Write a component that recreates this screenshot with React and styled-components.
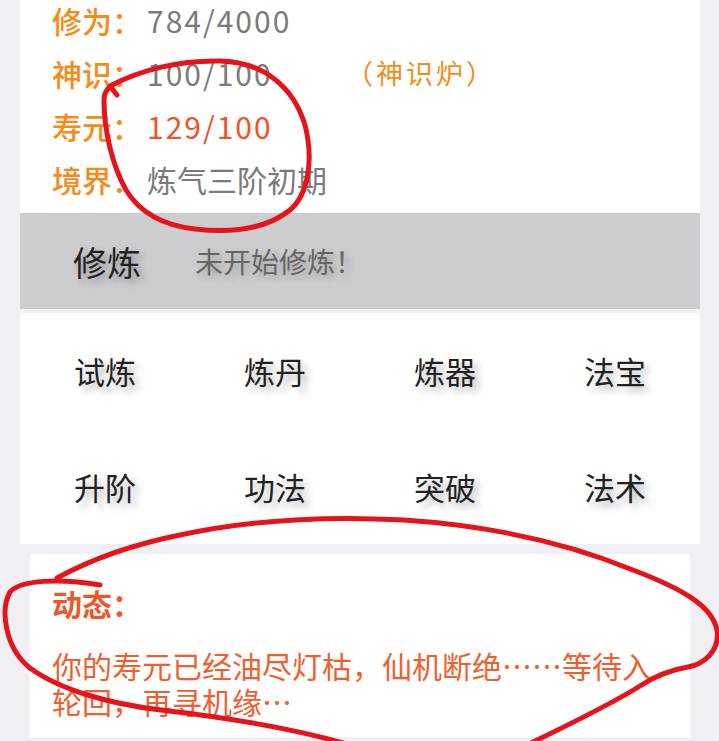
import React from "react";
import styled, { createGlobalStyle } from "styled-components";

const GlobalStyle = createGlobalStyle`
  html, body {
    margin: 0;
    padding: 0;
    background: #efeff4;
    overflow: hidden;
  }
  body {
    font-family: "Noto Sans CJK SC", "Noto Sans", sans-serif;
    text-spacing-trim: space-all;
  }
`;

const Page = styled.div`
  position: relative;
  display: flex;
  flex-direction: column;
  width: 719px;
  height: 741px;
  overflow: hidden;
`;

const InfoPanel = styled.section`
  margin: -7px 19px 0 20px;
  padding: 0 0 8px 32px;
  background: #ffffff;
`;

const InfoRow = styled.div`
  display: flex;
  align-items: center;
  height: 53px;
  font-size: 30px;
  line-height: 1;
  white-space: nowrap;
`;

const Label = styled.span`
  color: #f48c1a;
  font-weight: 500;
  width: 95px;
  flex: none;
`;

const Value = styled.span`
  color: ${(p) => (p.$alert ? "#f0522a" : "#7a7a7a")};
  letter-spacing: ${(p) => (p.$digits ? "2px" : "0")};
  min-width: ${(p) => (p.$wide ? "203px" : "0")};
`;

const Note = styled.span`
  display: inline-flex;
  align-items: center;
  margin-left: 4px;
  color: #f48c1a;
  font-size: 27px;
  letter-spacing: 3px;
`;

const OpenParen = styled.span`
  margin-left: -8px;
`;

const CultivateBar = styled.section`
  display: flex;
  align-items: center;
  height: 96px;
  margin: 0 19px 0 20px;
  padding-left: 53px;
  background: #cdcdcf;
`;

const BarTitle = styled.span`
  font-size: 34px;
  color: #222222;
  text-shadow: 4px 4px 7px rgba(0, 0, 0, 0.3);
`;

const BarStatus = styled.span`
  margin-left: 54px;
  font-size: 28px;
  color: #666666;
  text-shadow: 4px 4px 7px rgba(0, 0, 0, 0.22);
`;

const ActionGrid = styled.section`
  display: grid;
  grid-template-columns: repeat(4, 1fr);
  grid-template-rows: repeat(2, 115.5px);
  margin: 4px 19px 0 20px;
  background: #ffffff;
`;

const ActionItem = styled.div`
  display: flex;
  align-items: center;
  justify-content: center;
  font-size: 31px;
  color: #222222;
  text-shadow: 5px 5px 7px rgba(0, 0, 0, 0.28);
`;

const FeedPanel = styled.section`
  margin: 10px 29px 0 30px;
  height: 183px;
  box-sizing: border-box;
  padding: 29px 20px 0 22px;
  background: #ffffff;
`;

const FeedTitle = styled.div`
  font-size: 30px;
  line-height: 40px;
  font-weight: 700;
  color: #e85a2c;
`;

const FeedText = styled.p`
  margin: 24px 0 0;
  font-size: 30px;
  line-height: 36px;
  color: #f0602e;
`;

const Annotations = styled.svg`
  position: absolute;
  left: 0;
  top: 0;
  width: 719px;
  height: 741px;
  pointer-events: none;
`;

const actions = ["试炼", "炼丹", "炼器", "法宝", "升阶", "功法", "突破", "法术"];

export default function App() {
  return (
    <>
      <GlobalStyle />
      <Page>
        <InfoPanel>
          <InfoRow>
            <Label>修为：</Label>
            <Value $digits>784/4000</Value>
          </InfoRow>
          <InfoRow>
            <Label>神识：</Label>
            <Value $digits $wide>100/100</Value>
            <Note>
              <OpenParen>（</OpenParen>神识炉）
            </Note>
          </InfoRow>
          <InfoRow>
            <Label>寿元：</Label>
            <Value $digits $alert>129/100</Value>
          </InfoRow>
          <InfoRow>
            <Label>境界：</Label>
            <Value>炼气三阶初期</Value>
          </InfoRow>
        </InfoPanel>

        <CultivateBar>
          <BarTitle>修炼</BarTitle>
          <BarStatus>未开始修炼！</BarStatus>
        </CultivateBar>

        <ActionGrid>
          {actions.map((a) => (
            <ActionItem key={a}>{a}</ActionItem>
          ))}
        </ActionGrid>

        <FeedPanel>
          <FeedTitle>动态：</FeedTitle>
          <FeedText>你的寿元已经油尽灯枯，仙机断绝……等待入轮回，再寻机缘…</FeedText>
        </FeedPanel>

        <Annotations viewBox="0 0 719 741">
          <g fill="none" stroke="#e5141c" strokeWidth="5" strokeLinecap="round" strokeLinejoin="round">
            <path d="M 117 95 L 110 86 C 140 70, 180 60, 220 61 C 262 62, 293 85, 305 125 C 314 160, 308 195, 290 210 C 265 230, 230 233, 195 229 C 160 225, 138 210, 126 190 C 112 165, 104 130, 104 100 C 104 92, 108 88, 112 86" />
            <path d="M 57 578 C 90 560, 130 545, 180 535 C 250 520, 330 516, 404 520 C 480 525, 560 540, 633 570 C 680 588, 712 605, 717 630 C 720 650, 705 664, 688 667 C 670 670, 655 676, 640 686 C 610 705, 570 724, 527 745" />
            <path d="M 350 745 C 300 730, 230 718, 161 710 C 110 704, 60 690, 30 668 C 5 648, 0 610, 10 592 C 20 580, 60 578, 100 585" />
          </g>
        </Annotations>
      </Page>
    </>
  );
}
